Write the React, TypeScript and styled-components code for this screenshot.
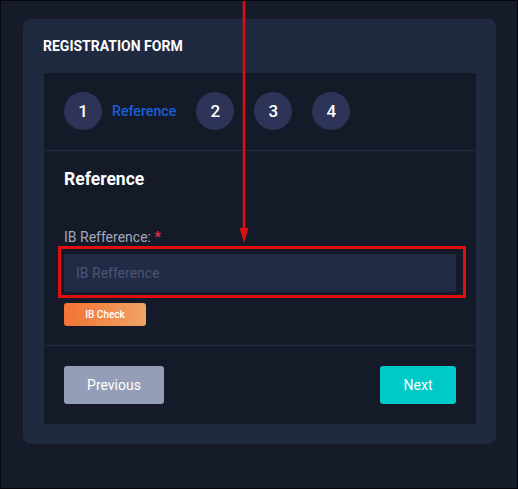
import React from "react";
import styled, { createGlobalStyle } from "styled-components";

const Global = createGlobalStyle`
  html, body { margin: 0; padding: 0; background: #161b2a; }
  * { box-sizing: border-box; }
`;

const Page = styled.div`
  position: relative;
  width: 518px;
  height: 489px;
  background: #161b2a;
  border: 1px solid #05070c;
  padding: 18px 21px 0 22px;
  font-family: Roboto, "Liberation Sans", sans-serif;
`;

const Card = styled.div`
  background: #1f2940;
  border-radius: 8px;
  padding: 19px 20px 20px 21px;
`;

const CardTitle = styled.h2`
  margin: 0 0 18px -1px;
  height: 17px;
  font-size: 14px;
  line-height: 17px;
  font-weight: 700;
  color: #ffffff;
  letter-spacing: 0;
  text-transform: uppercase;
`;

const Panel = styled.div`
  background: #151a29;
`;

const Steps = styled.div`
  display: flex;
  align-items: center;
  gap: 20px;
  padding: 19px 20px 20px 20px;
  border-bottom: 1px solid #262d42;
`;

const Step = styled.div`
  display: flex;
  align-items: center;
  gap: 10px;
`;

const Circle = styled.div`
  width: 38px;
  height: 38px;
  border-radius: 50%;
  background: #2e3458;
  color: #ffffff;
  display: flex;
  align-items: center;
  justify-content: center;
  font-size: 17px;
  font-weight: 500;
`;

const StepLabel = styled.span`
  color: #1a5fd8;
  font-size: 14.2px;
  font-weight: 500;
`;

const Body = styled.div`
  padding: 17px 20px 19px 20px;
  border-bottom: 1px solid #262d42;
`;

const Heading = styled.h3`
  margin: 0 0 39px 0;
  font-size: 17.5px;
  line-height: 22px;
  font-weight: 700;
  color: #ffffff;
`;

const Label = styled.label`
  display: block;
  font-size: 14px;
  line-height: 16px;
  color: #a3a8ba;
  margin-bottom: 9px;
`;

const Req = styled.span`
  color: #e8304a;
  font-weight: 700;
`;

const InputWrap = styled.div`
  position: relative;
`;

const Input = styled.input`
  display: block;
  width: 100%;
  height: 38px;
  border: none;
  outline: none;
  border-radius: 3px;
  background: #222b45;
  padding: 0 12px;
  font-family: Roboto, "Liberation Sans", sans-serif;
  font-size: 14px;
  color: #ffffff;
  &::placeholder { color: #4c5576; }
`;

const Highlight = styled.div`
  position: absolute;
  left: -6px;
  right: -10px;
  top: -8px;
  bottom: -6px;
  border: 3px solid #e00f0f;
  pointer-events: none;
`;

const CheckButton = styled.button`
  margin-top: 11px;
  width: 82px;
  height: 23px;
  border: none;
  border-radius: 3px;
  background: linear-gradient(90deg, #f27434 0%, #efa365 100%);
  color: #ffffff;
  font-family: Roboto, "Liberation Sans", sans-serif;
  font-size: 10px;
  font-weight: 500;
  padding: 0;
`;

const Footer = styled.div`
  display: flex;
  justify-content: space-between;
  align-items: center;
  padding: 20px 20px 20px 20px;
`;

const NavButton = styled.button<{ $tone: "muted" | "primary"; $w: number }>`
  width: ${(p) => p.$w}px;
  height: 38px;
  border: none;
  border-radius: 3px;
  background: ${(p) => (p.$tone === "muted" ? "#959eb8" : "#00cac8")};
  color: #ffffff;
  font-family: Roboto, "Liberation Sans", sans-serif;
  font-size: 14px;
  padding: 0;
`;

const Arrow = styled.svg`
  position: absolute;
  left: 236px;
  top: 0;
  pointer-events: none;
`;

export default function App() {
  return (
    <>
      <Global />
      <Page>
        <Card>
          <CardTitle>Registration Form</CardTitle>
          <Panel>
            <Steps>
              <Step>
                <Circle>1</Circle>
                <StepLabel>Reference</StepLabel>
              </Step>
              <Step>
                <Circle>2</Circle>
              </Step>
              <Step>
                <Circle>3</Circle>
              </Step>
              <Step>
                <Circle>4</Circle>
              </Step>
            </Steps>
            <Body>
              <Heading>Reference</Heading>
              <Label>
                IB Refference: <Req>*</Req>
              </Label>
              <InputWrap>
                <Input placeholder="IB Refference" />
                <Highlight />
              </InputWrap>
              <CheckButton>IB Check</CheckButton>
            </Body>
            <Footer>
              <NavButton $tone="muted" $w={100}>Previous</NavButton>
              <NavButton $tone="primary" $w={76}>Next</NavButton>
            </Footer>
          </Panel>
        </Card>
        <Arrow width="14" height="244" viewBox="0 0 14 244">
          <line x1="7" y1="0" x2="7" y2="230" stroke="#e00f0f" strokeWidth="2.5" />
          <polygon points="2.5,227 11.5,227 7,242" fill="#e00f0f" />
        </Arrow>
      </Page>
    </>
  );
}
